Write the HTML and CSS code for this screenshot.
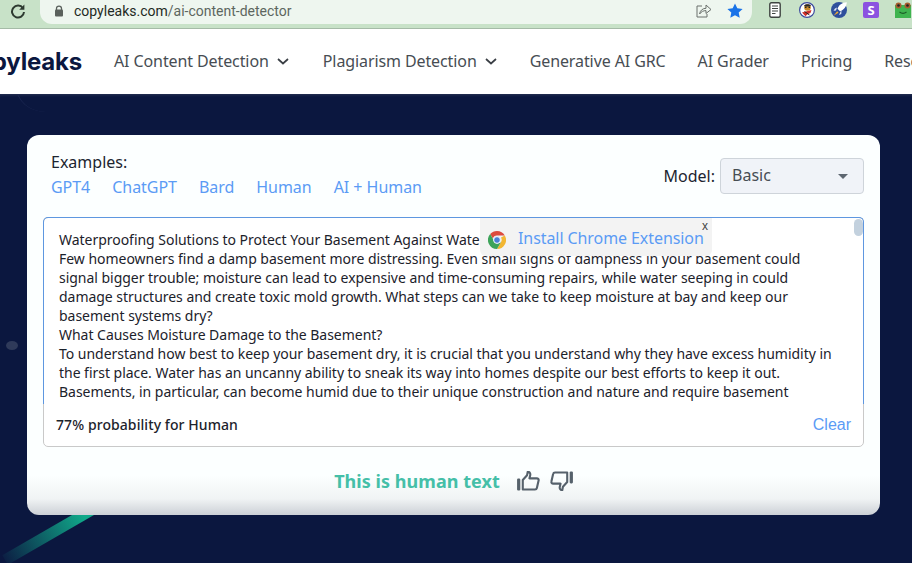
FILE: index.html
```html
<!DOCTYPE html>
<html lang="en">
<head>
<meta charset="utf-8">
<title>Copyleaks AI Content Detector</title>
<link rel="stylesheet" href="styles.css">
</head>
<body>
<div class="toolbar">
  <svg class="reload" width="16" height="16" viewBox="0 0 16 16"><path d="M13 5.2A6 6 0 1 0 14 9" fill="none" stroke="#2d3a30" stroke-width="2"/><path d="M14.4 1.6v5.2H9.2z" fill="#2d3a30"/></svg>
  <div class="omnibox">
    <svg class="lock" width="10" height="12" viewBox="0 0 10 12"><path d="M2.5 5V3.6a2.5 2.5 0 0 1 5 0V5" fill="none" stroke="#5a615c" stroke-width="1.3"/><rect x="1" y="4.6" width="8" height="7" rx="1" fill="#5a615c"/></svg>
    <span class="url"><span class="host">copyleaks.com</span>/ai-content-detector</span>
    <svg class="share" width="16" height="15" viewBox="0 0 16 15"><path d="M6 3H1v11h10v-3" fill="none" stroke="#6a706c" stroke-width="1"/><path d="M3.6 11C4 7.400 6.800 5.300 10 5.300V2l5 4.500-5 4V7.600c-2.600 0-4.800 1-6.400 3.400z" fill="none" stroke="#6a706c" stroke-width="1"/></svg>
    <svg class="star" width="16" height="15" viewBox="0 0 16 15"><path d="M8 .4l2.300 4.900 5.300.6-3.900 3.600 1 5.300L8 12.200l-4.700 2.600 1-5.300L.4 5.900l5.300-.6z" fill="#1a73e8"/></svg>
  </div>
  <div class="extensions">
    <svg class="ext-doc" width="12" height="16" viewBox="0 0 12 16"><rect x=".8" y=".8" width="10.400" height="14.400" rx="1.500" fill="#fff" stroke="#3f4441" stroke-width="1.400"/><path d="M3 4h6M3 6.500h6M3 9h6M3 11.500h3.500" stroke="#3f4441" stroke-width="1.200"/></svg>
    <svg width="16" height="16" viewBox="0 0 16 16"><circle cx="8" cy="8" r="7.400" fill="#fff" stroke="#3c4a9e" stroke-width="1.200"/><circle cx="8.500" cy="5.500" r="3.300" fill="#c98a2c"/><path d="M5 3.600C6.500 1.800 10.500 1.800 12 3.600L11 4.400H6z" fill="#2a2a2a"/><path d="M3 10.500l9.500-2.500-1 3-3 1.200-2 2z" fill="#d02f2a"/><path d="M6 5.400h1.500M9.500 5.400H11" stroke="#222" stroke-width="1.200"/><path d="M5.500 9.500l5 3.500" stroke="#222" stroke-width="1"/></svg>
    <svg width="16" height="16" viewBox="0 0 16 16"><circle cx="8" cy="8" r="8" fill="#2e4f9c"/><path d="M15.800 .2c-4.800.2-7.900 2.800-9.300 6.500L9 9.300c3.800-1.500 6.500-4.300 6.800-9.100z" fill="#fff"/><path d="M4 6.500l2-1-1 3-2.500.2zM9.500 9.800l1-1.800-.2 4-2.300 1z" fill="#dfe6f5"/><path d="M6.200 9.200l-3.700 4.500 5-3z" fill="#f2a930"/></svg>
    <span class="ext-s">S</span>
    <svg class="frog" width="16" height="16" viewBox="0 0 16 16"><rect y="3" width="16" height="13" fill="#3fb44f"/><circle cx="3.500" cy="3.500" r="3" fill="#a85f30"/><circle cx="12.500" cy="3.500" r="3" fill="#a85f30"/><circle cx="3.500" cy="3.500" r="1.300" fill="#222"/><circle cx="12.500" cy="3.500" r="1.300" fill="#222"/><path d="M4.500 10c2 1.500 5 1.500 7 0" fill="none" stroke="#1c5c28" stroke-width="1.200"/></svg>
  </div>
</div>

<nav class="nav">
  <span class="logo">copyleaks</span>
  <ul class="menu">
    <li>AI Content Detection <svg class="chev" width="12" height="7" viewBox="0 0 12 7"><path d="M1 1l5 4.500L11 1" fill="none" stroke="#3a3f45" stroke-width="1.700"/></svg></li>
    <li>Plagiarism Detection <svg class="chev" width="12" height="7" viewBox="0 0 12 7"><path d="M1 1l5 4.500L11 1" fill="none" stroke="#3a3f45" stroke-width="1.700"/></svg></li>
    <li>Generative AI GRC</li>
    <li>AI Grader</li>
    <li>Pricing</li>
    <li>Resources</li>
  </ul>
</nav>

<main class="stage">
  <div class="arc"></div>
  <div class="spot"></div>
  <div class="beam"></div>
  <section class="card">
    <header class="card-head">
      <div class="examples">
        <div class="examples-title">Examples:</div>
        <div class="example-links">
          <a>GPT4</a><a>ChatGPT</a><a>Bard</a><a>Human</a><a>AI + Human</a>
        </div>
      </div>
      <div class="model">
        <span class="model-label">Model:</span>
        <div class="select"><span>Basic</span><i class="caret"></i></div>
      </div>
    </header>

    <div class="editor">
      <div class="editor-text">
        <p>Waterproofing Solutions to Protect Your Basement Against Water Damage<br>
        Few homeowners find a damp basement more distressing. Even small signs of dampness in your basement could<br>
        signal bigger trouble; moisture can lead to expensive and time-consuming repairs, while water seeping in could<br>
        damage structures and create toxic mold growth. What steps can we take to keep moisture at bay and keep our<br>
        basement systems dry?<br>
        What Causes Moisture Damage to the Basement?<br>
        To understand how best to keep your basement dry, it is crucial that you understand why they have excess humidity in<br>
        the first place. Water has an uncanny ability to sneak its way into homes despite our best efforts to keep it out.<br>
        Basements, in particular, can become humid due to their unique construction and nature and require basement</p>
        <div class="scrollbar"></div>
      </div>
      <div class="editor-foot">
        <strong>77% probability for Human</strong>
        <a class="clear">Clear</a>
      </div>
      <div class="promo">
        <svg width="18" height="18" viewBox="0 0 18 18"><path d="M9 0a9 9 0 0 1 7.800 4.500H9A4.500 4.500 0 0 0 4.800 7.400L2.200 3.100A9 9 0 0 1 9 0z" fill="#dd4b3e"/><path d="M16.800 4.500A9 9 0 0 1 9 18l3.900-6.700A4.500 4.500 0 0 0 13 6.500L16.800 4.500z" fill="#f2b632"/><path d="M2.200 3.100l3.900 6.800A4.500 4.500 0 0 0 12.900 11.300L9 18A9 9 0 0 1 2.200 3.100z" fill="#3da35a"/><circle cx="9" cy="9" r="3.400" fill="#4a80d8" stroke="#fff" stroke-width="1"/></svg>
        <a class="promo-link">Install Chrome Extension</a>
        <span class="promo-close">x</span>
      </div>
    </div>

    <div class="verdict">
      <span class="verdict-text">This is human text</span>
      <svg class="vote" width="24" height="21" viewBox="0 0 24 21"><rect x="0" y="8" width="3.400" height="12.500" rx="1.200" fill="#56616b"/><path d="M6 9.500 10.500 4.500 11.200.8c2.300 0 3 2 2.600 3.700l-.8 3.200h7.700c1.400 0 2.200 1 1.900 2.200l-1.800 8c-.2 1-1 1.500-2 1.500H6z" fill="none" stroke="#56616b" stroke-width="2.200" stroke-linejoin="round"/></svg>
      <svg class="vote" width="24" height="21" viewBox="0 0 24 21"><rect x="20.600" y=".5" width="3.400" height="12.500" rx="1.200" fill="#56616b"/><path d="M18 11.500 13.500 16.500 12.800 20.200c-2.300 0-3-2-2.600-3.700l.8-3.200H3.300c-1.400 0-2.200-1-1.900-2.200l1.800-8c.2-1 1-1.500 2-1.500H18z" fill="none" stroke="#56616b" stroke-width="2.200" stroke-linejoin="round"/></svg>
    </div>
  </section>
</main>
</body>
</html>
```
FILE: styles.css
```css
* { box-sizing: border-box; }
html, body { margin: 0; padding: 0; }
body {
  width: 912px;
  height: 563px;
  overflow: hidden;
  display: flex;
  flex-direction: column;
  font-family: "Noto Sans", "Open Sans", sans-serif;
  background: #0b173f;
}
a { color: #5b9bf5; }

/* Browser chrome */
.toolbar {
  flex: none;
  height: 29px;
  display: flex;
  align-items: flex-start;
  background: #c8e2c8;
  border-bottom: 1px solid #a5bba7;
  overflow: hidden;
}
.reload { margin: 3px 0 0 10px; flex: none; }
.omnibox {
  flex: none;
  width: 712px;
  height: 24px;
  margin-left: 14px;
  display: flex;
  align-items: center;
  padding: 0 0 3px 14px;
  background: #eef6ef;
  border-radius: 0 0 12px 12px;
}
.lock { flex: none; }
.url {
  margin-left: 10px;
  font-size: 14px;
  font-family: "Roboto", sans-serif;
  color: #5d6660;
}
.host { color: #1f2a24; }
.share { margin-left: auto; }
.star { margin: 0 9px 0 15px; }
.extensions {
  display: flex;
  align-items: center;
  gap: 16px;
  margin: 2px 0 0 17px;
  height: 16px;
}
.extensions svg { flex: none; }
.ext-doc { margin-right: 2px; }
.ext-s {
  flex: none;
  width: 16px;
  height: 16px;
  border-radius: 2px;
  background: #8b52e0;
  color: #fff;
  font: 700 13px/16px "Noto Sans", sans-serif;
  text-align: center;
}

/* Site nav */
.nav {
  flex: none;
  height: 65px;
  display: flex;
  align-items: center;
  background: #fff;
  overflow: hidden;
  white-space: nowrap;
}
.logo {
  flex: none;
  width: 82px;
  direction: rtl;
  overflow: hidden;
  font: 700 24px/32px "Inter", sans-serif;
  letter-spacing: -.2px;
  color: #0b173f;
}
.menu {
  list-style: none;
  margin: 0 0 1px 32px;
  padding: 0;
  display: flex;
  gap: 32px;
  font-size: 16px;
  letter-spacing: -.1px;
  color: #474d53;
}
.menu li { display: flex; align-items: center; gap: 8px; flex: none; }
.chev { margin-top: 1px; }
.menu li:nth-child(2) { margin-left: 2px; }
.menu li:nth-child(3) { margin-left: 1px; }

/* Page stage */
.stage {
  flex: 1;
  position: relative;
  padding: 41px 32px 0 27px;
  overflow: hidden;
  box-shadow: inset 0 3px 3px -2px #2a3354;
}
.arc {
  position: absolute;
  left: 16px;
  top: -32px;
  width: 60px;
  height: 50px;
  border-left: 1px solid #1c2852;
  border-radius: 50%;
}
.spot {
  position: absolute;
  left: 6px;
  top: 247px;
  width: 12px;
  height: 9px;
  border-radius: 50%;
  background: #2f3a5a;
}
.beam {
  position: absolute;
  left: -5px;
  top: 423px;
  width: 150px;
  height: 11px;
  transform: rotate(-30deg);
  background: linear-gradient(90deg, #0c1f44 0%, #10a98a 60%);
}
.card {
  position: relative;
  width: 853px;
  height: 380px;
  padding: 16px 16px 0;
  border-radius: 12px;
  background: linear-gradient(180deg, #fcffff 0, #fcffff 340px, #f0f3f4 364px, #ccd0d6 380px);
}
.card-head {
  height: 66px;
  display: flex;
  justify-content: space-between;
  align-items: flex-start;
}
.examples { padding-left: 8px; }
.examples-title {
  font-size: 16px;
  line-height: 22px;
  color: #1d2530;
}
.example-links {
  display: flex;
  gap: 22px;
  margin-top: 3px;
  font-size: 16px;
  line-height: 22px;
  letter-spacing: -.04px;
}
.model {
  display: flex;
  align-items: center;
  gap: 5px;
  margin-top: 7px;
}
.model-label { font-size: 16px; color: #1d2530; }
.select {
  width: 144px;
  height: 36px;
  display: flex;
  align-items: center;
  justify-content: space-between;
  padding: 0 15px 2px 11px;
  font-size: 16px;
  color: #474d53;
  background: #f0f3f8;
  border: 1px solid #ced4da;
  border-radius: 4px;
}
.caret {
  width: 0;
  height: 0;
  margin-top: 3px;
  border-left: 5px solid transparent;
  border-right: 5px solid transparent;
  border-top: 5px solid #5d6670;
}

/* Editor */
.editor {
  position: relative;
  height: 230px;
  display: flex;
  flex-direction: column;
  background: #fff;
  border: 1px solid #c9c9c9;
  border-radius: 5px;
}
.editor-text {
  position: relative;
  height: 187px;
  margin: -1px -1px 0;
  padding: 12px 0 0 15px;
  overflow: hidden;
  border: 1px solid #5e97e0;
  border-bottom: 0;
  border-radius: 5px 5px 0 0;
}
.editor-text p {
  margin: 0;
  font-size: 14px;
  line-height: 19px;
  letter-spacing: -.03px;
  color: #1c222b;
  white-space: nowrap;
}
.scrollbar {
  position: absolute;
  right: 0;
  top: 1px;
  width: 9px;
  height: 17px;
  border-radius: 5px;
  background: #c3d1de;
}
.editor-foot {
  flex: 1;
  display: flex;
  align-items: center;
  justify-content: space-between;
  padding: 0 12px 1px 12px;
}
.editor-foot strong {
  font-size: 14px;
  font-weight: 500;
  letter-spacing: .08px;
  color: #1c222b;
}
.clear { font: 16px "Liberation Sans", sans-serif; }
.promo {
  position: absolute;
  left: 436px;
  top: 0;
  width: 232px;
  height: 38px;
  display: flex;
  align-items: center;
  gap: 12px;
  padding: 2px 0 0 8px;
  background: #f3f3f3;
  border-radius: 0 0 6px 6px;
}
.promo svg { flex: none; margin-top: 4px; }
.promo-link { font-size: 16px; letter-spacing: -.08px; white-space: nowrap; }
.promo-close {
  position: absolute;
  right: 4px;
  top: 1px;
  font: 12px/14px "Liberation Sans", sans-serif;
  color: #444;
}

/* Verdict */
.verdict {
  display: flex;
  align-items: center;
  justify-content: center;
  gap: 10px;
  height: 70px;
  padding-bottom: 2px;
}
.vote { width: 23px; height: 20px; }
.verdict-text {
  margin-right: 7px;
  font-size: 18px;
  font-weight: 700;
  letter-spacing: .05px;
  color: #45bfa8;
}
```
